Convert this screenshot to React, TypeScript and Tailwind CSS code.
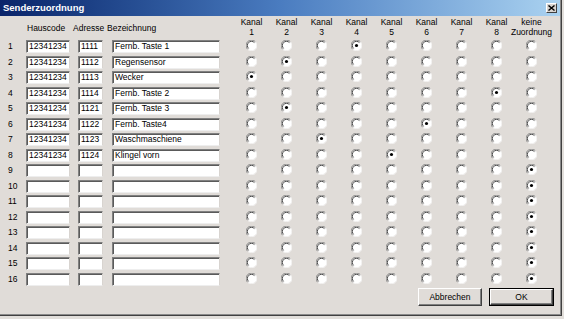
const rows = [
  {code: '12341234', addr: '1111', name: 'Fernb. Taste 1', sel: 3},
  {code: '12341234', addr: '1112', name: 'Regensensor', sel: 1},
  {code: '12341234', addr: '1113', name: 'Wecker', sel: 0},
  {code: '12341234', addr: '1114', name: 'Fernb. Taste 2', sel: 7},
  {code: '12341234', addr: '1121', name: 'Fernb. Taste 3', sel: 1},
  {code: '12341234', addr: '1122', name: 'Fernb. Taste4', sel: 5},
  {code: '12341234', addr: '1123', name: 'Waschmaschiene', sel: 2},
  {code: '12341234', addr: '1124', name: 'Klingel vorn', sel: 4},
  ...Array.from({length: 8}, () => ({code: '', addr: '', name: '', sel: 8})),
]

const columns = [
  ['Kanal', '1'],
  ['Kanal', '2'],
  ['Kanal', '3'],
  ['Kanal', '4'],
  ['Kanal', '5'],
  ['Kanal', '6'],
  ['Kanal', '7'],
  ['Kanal', '8'],
  ['keine', 'Zuordnung'],
]

const Radio = ({checked}: {checked: boolean}) => (
  <svg width="11" height="11" viewBox="0 0 12 12" className="-mt-[2px]">
    <circle cx="6" cy="6" r="5.5" fill="#fff" />
    <path d="M10.2 1.8 A5.5 5.5 0 0 0 1.8 10.2" fill="none" stroke="#7a7a7a" strokeWidth="1" />
    <path d="M9.2 2.8 A4.5 4.5 0 0 0 2.8 9.2" fill="none" stroke="#3c3c3c" strokeWidth="1" />
    <path d="M10.2 1.8 A5.5 5.5 0 0 1 1.8 10.2" fill="none" stroke="#f6f6f6" strokeWidth="1" />
    {checked && <circle cx="6" cy="6" r="1.7" fill="#000" />}
  </svg>
)

const Field = ({value, width}: {value: string; width: string}) => (
  <div
    className={`${width} h-[13px] bg-white border border-t-[#808080] border-l-[#808080] border-b-[#eeeeee] border-r-[#d8d4d0] shadow-[inset_1px_1px_0_#5a5a5a] pl-[2px] leading-[11px] overflow-hidden whitespace-nowrap`}
  >
    {value}
  </div>
)

const WinButton = ({label, isDefault}: {label: string; isDefault?: boolean}) => (
  <button
    className={`h-[18px] ${isDefault ? 'w-[65px] border border-black' : 'w-[64px]'} bg-[#e0dcd8]`}
  >
    <div className="h-full w-full flex items-center justify-center border border-t-white border-l-white border-b-[#404040] border-r-[#404040] shadow-[inset_-1px_-1px_0_#808080]">
      {label}
    </div>
  </button>
)

export default function App() {
  return (
    <div className="w-[564px] h-[319px] bg-[#e2dfdb] font-['Liberation_Sans',Arial,sans-serif] text-[8.5px] text-black">
      <div className="w-[562px] h-[316px] border-r border-b border-[#404040]">
        <div className="h-full border-r border-b border-[#8a8a8a] flex flex-col bg-[#e0dcd8]">
          <div className="h-[16px] flex items-center justify-between pl-[3px] pr-[3px] bg-linear-to-r from-[#0a246a] via-[#4a7cc0] to-[#aad2f0]">
            <span className="text-white font-bold text-[9.5px] leading-none">Senderzuordnung</span>
            <div className="w-[11px] h-[10px] bg-[#d8d4d0] border border-t-white border-l-white border-b-[#404040] border-r-[#404040] flex items-center justify-center">
              <svg width="7" height="6" viewBox="0 0 7 6">
                <path d="M0.5 0.5 L6.5 5.5 M6.5 0.5 L0.5 5.5" stroke="#000" strokeWidth="1.4" />
              </svg>
            </div>
          </div>

          <div className="flex h-[23px]">
            <div className="w-[234px] flex items-end pb-[6px] pl-[27px] leading-[10px]">
              <span className="w-[46px]">Hauscode</span>
              <span className="w-[34px]">Adresse</span>
              <span>Bezeichnung</span>
            </div>
            {columns.map(([a, b], i) => (
              <div key={i} className="w-[35px] flex flex-col items-center pt-[1px] leading-[10px] whitespace-nowrap">
                <span>{a}</span>
                <span>{b}</span>
              </div>
            ))}
          </div>

          <div className="flex flex-col">
            {rows.map((r, i) => (
              <div key={i} className="flex h-[15.5px] items-center">
                <span className="w-[26px] pl-[8px]">{i + 1}</span>
                <Field value={r.code} width="w-[44px]" />
                <div className="w-[8px]" />
                <Field value={r.addr} width="w-[25px]" />
                <div className="w-[9px]" />
                <Field value={r.name} width="w-[108px]" />
                <div className="w-[14px]" />
                {columns.map((_, c) => (
                  <div key={c} className="w-[35px] flex justify-center">
                    <Radio checked={r.sel === c} />
                  </div>
                ))}
              </div>
            ))}
          </div>

          <div className="flex justify-end gap-[7px] pr-[6px] mt-[1px]">
            <WinButton label="Abbrechen" />
            <WinButton label="OK" isDefault />
          </div>
        </div>
      </div>
    </div>
  )
}
